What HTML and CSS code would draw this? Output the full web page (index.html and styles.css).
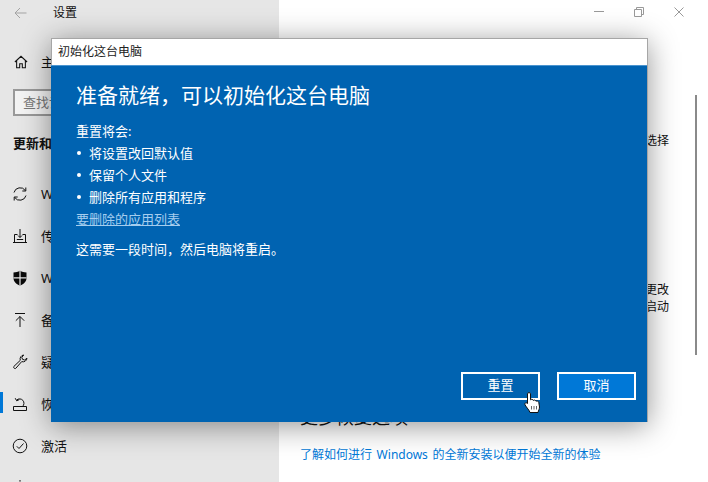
FILE: index.html
```html
<!DOCTYPE html>
<html lang="zh-CN">
<head>
<meta charset="utf-8">
<title>设置</title>
<link rel="stylesheet" href="styles.css">
</head>
<body>
<div class="app">
  <aside class="sidebar">
    <div class="titlebar">
      <svg class="back" width="13" height="12" viewBox="0 0 13 12"><path d="M12.500 6H1M6 1 1 6 6 11" fill="none" stroke="#a3a3a3" stroke-width="1"/></svg>
      <span class="app-title">设置</span>
    </div>
    <div class="nav-item home">
      <svg class="icon home-icon" width="14" height="14" viewBox="0 0 16 16"><path d="M1 8 8 1.500 15 8M3 6.500V14.500H6.500V10H9.500V14.500H13V6.500" fill="none" stroke="#111" stroke-width="1.200"/></svg>
      <span>主页</span>
    </div>
    <div class="search"><span>查找设置</span></div>
    <div class="section">更新和安全</div>
    <nav class="nav">
      <div class="nav-item">
        <svg class="icon" width="16" height="16" viewBox="0 0 16 16"><path d="M2 6.500A6.300 6.300 0 0 1 13.300 4.500M14 9.500A6.300 6.300 0 0 1 2.700 11.500M13.800 1.500V5H10.300M2.200 14.500V11H5.700" fill="none" stroke="#111" stroke-width="1"/></svg>
        <span>Windows 更新</span>
      </div>
      <div class="nav-item">
        <svg class="icon" width="16" height="16" viewBox="0 0 16 16"><path d="M1 14.500H15M2.500 14V6.500H5.500M10.500 6.500H13.500V14M8 1V9.500M6 7.500 8 9.500 10 7.500M4.800 11.500H11.200" fill="none" stroke="#111" stroke-width="1"/></svg>
        <span>传递优化</span>
      </div>
      <div class="nav-item">
        <svg class="icon" width="16" height="16" viewBox="0 0 16 16"><path d="M1.500 2.500C4 2.500 6 2 8 .8 10 2 12 2.500 14.500 2.500V8C14.500 11.500 12 14 8 15.500 4 14 1.500 11.500 1.500 8Z" fill="#0a0a0a"/><path d="M8 1V15.500M1.500 7.800H14.500" stroke="#e6e6e6" stroke-width="1.200"/></svg>
        <span>Windows 安全中心</span>
      </div>
      <div class="nav-item">
        <svg class="icon" width="16" height="16" viewBox="0 0 16 16"><path d="M3 1.500H13M8 15V4.500M3.800 8.700 8 4.500 12.200 8.700" fill="none" stroke="#111" stroke-width="1"/></svg>
        <span>备份</span>
      </div>
      <div class="nav-item">
        <svg class="icon" width="16" height="16" viewBox="0 0 16 16"><path d="M15 4.200A4 4 0 0 1 9.700 7.600L3.800 14.300C2.800 15.300 .9 13.600 1.900 12.400L8.300 6.300A4 4 0 0 1 11.700 1L9.800 3.300 10.500 5.300 12.600 6Z" fill="none" stroke="#111" stroke-width="1"/></svg>
        <span>疑难解答</span>
      </div>
      <div class="nav-item active">
        <svg class="icon" width="16" height="16" viewBox="0 0 16 16"><path d="M1.500 10.500H14.500V14.500H1.500ZM4.700 4A3.600 3.600 0 1 1 10.500 10.500M3.200 2.200 4.700 4.800 7.300 3.600M5 10.500H10.500" fill="none" stroke="#111" stroke-width="1"/></svg>
        <span>恢复</span>
      </div>
      <div class="nav-item">
        <svg class="icon" width="16" height="16" viewBox="0 0 16 16"><circle cx="8" cy="8" r="6.800" fill="none" stroke="#111" stroke-width="1"/><path d="M4.800 8.300 7 10.500 11.500 5.500" fill="none" stroke="#111" stroke-width="1"/></svg>
        <span>激活</span>
      </div>
      <div class="nav-item">
        <svg class="icon" width="16" height="16" viewBox="0 0 16 16"><circle cx="8" cy="6" r="4" fill="none" stroke="#111"/><path d="M8 1V0M2 15C3 11 13 11 14 15" fill="none" stroke="#111"/></svg>
        <span>查找我的设备</span>
      </div>
    </nav>
  </aside>
  <main class="content">
    <div class="window-controls">
      <svg width="10" height="10" viewBox="0 0 10 10"><path d="M0 4.500H10" stroke="#999"/></svg>
      <svg width="10" height="10" viewBox="0 0 10 10"><path d="M.5 2.500H7.500V9.500H.5ZM2.500 2.500V.5H9.500V7.500H7.500" fill="none" stroke="#999"/></svg>
      <svg width="10" height="10" viewBox="0 0 10 10"><path d="M.5 .5 9.500 9.500M9.500 .5 .5 9.500" stroke="#999"/></svg>
    </div>
    <div class="scroll-area">
      <div class="text-block block-a">
        <p>如果你的电脑未正常运行，重置电脑可能会解决问题。重置时，可以选择</p>
      </div>
      <div class="text-block block-b">
        <p>通过使用 Windows 设备映像进行启动、更改 Windows 启动设置或者更改</p>
        <p>从系统映像还原 Windows。这将重新启动</p>
      </div>
      <h2 class="more">更多恢复选项</h2>
      <a class="learn" href="#">了解如何进行 Windows 的全新安装以便开始全新的体验</a>
    </div>
    <div class="scrollbar"></div>
  </main>
</div>
<section class="dialog">
  <header class="dialog-title">初始化这台电脑</header>
  <div class="dialog-body">
    <h1>准备就绪，可以初始化这台电脑</h1>
    <p class="line lead">重置将会:</p>
    <ul>
      <li>将设置改回默认值</li>
      <li>保留个人文件</li>
      <li>删除所有应用和程序</li>
    </ul>
    <a class="line apps" href="#">要删除的应用列表</a>
    <p class="line note">这需要一段时间，然后电脑将重启。</p>
    <div class="actions">
      <button class="btn">重置</button>
      <button class="btn cancel">取消</button>
    </div>
  </div>
</section>
<svg class="cursor" width="17" height="21" viewBox="0 0 17 21"><path d="M3.500 1.800C3.500 .2 6.500 .2 6.500 1.800V7.800C7 7 9 7 9.300 8.500 9.800 7.700 11.700 7.900 12 9.300 12.600 8.600 14.500 9 14.800 10.500L15.500 15C15.500 17 14.500 18.500 14 20.500H6C5.500 18.500 2.500 15.500 1 12.800 .2 11.200 2 10 3.500 11.500Z" fill="#fff" stroke="#111" stroke-width="1"/><path d="M7.500 14V17.500M10 14V17.500M12.500 14V17.500" stroke="#666" stroke-width="1"/></svg>
</body>
</html>
```

FILE: styles.css
```css
* { box-sizing: border-box; }
html, body { margin: 0; height: 482px; overflow: hidden; }
body {
  position: relative;
  width: 708px;
  background: #fff;
  color: #111;
  font: 13px/22px "Noto Sans", "Noto Sans CJK SC", sans-serif;
}
p, h1, h2, ul { margin: 0; padding: 0; }
.app { display: flex; height: 482px; }

.sidebar { width: 279px; flex: none; background: #e6e6e6; overflow: hidden; }
.titlebar { display: flex; align-items: center; height: 25px; margin-top: 0; padding-left: 14px; }
.back { margin-right: 26px; }
.app-title { font-size: 12px; }
.home { height: 42px !important; margin-top: 16px; padding-left: 14px !important; }
.home-icon { margin-right: 13px !important; }
.search {
  width: 250px; height: 27px; margin: 6px 0 0 13px;
  border: 2px solid #999; background: #f3f3f3; padding-left: 8px;
  color: #777; line-height: 23px;
}
.section { margin: 16px 0 0 13px; font-weight: 700; line-height: 22px; }
.nav { margin-top: 19px; }
.nav-item {
  position: relative;
  display: flex; align-items: center; height: 42px; padding-left: 12px;
  white-space: nowrap;
}
.icon { margin-right: 13px; flex: none; }
.active::before {
  content: ""; position: absolute; left: 0; top: 9px;
  width: 3px; height: 21px; background: #0078d7;
}

.content { position: relative; flex: 1; padding-left: 21px; }
.window-controls {
  position: absolute; top: 7px; right: 24px;
  display: flex; gap: 30px;
}
.scroll-area { padding-top: 131px; }
.text-block { width: 369px; text-align: right; white-space: nowrap; font-size: 12px; }
.text-block p { line-height: 17px; direction: rtl; }
.block-a { height: 149px; padding-top: 1px; }
.block-b { height: 101px; padding-top: 1px; }
.more { font-size: 18px; font-weight: 400; line-height: 28px; margin-top: 22px; }
.learn { display: block; margin-top: 13px; font-size: 12px; word-spacing: 1.500px; color: #0078d7; text-decoration: none; }
.scrollbar { position: absolute; left: 416px; top: 95px; width: 2px; height: 260px; background: #8a8a8a; }

.dialog {
  position: absolute; left: 51px; top: 38px;
  display: flex; flex-direction: column;
  width: 597px; height: 384px;
  border: 1px solid #a6a6a6; border-bottom: 0; border-left: 0;
  box-shadow: 0 4px 28px rgba(0,0,0,.42);
  background: #0063b1;
}
.dialog-title {
  height: 26px; padding-left: 6px; background: #fff;
  border-left: 1px solid #a6a6a6;
  font-size: 12px; line-height: 25px; color: #222;
}
.dialog-body {
  flex: 1; display: flex; flex-direction: column;
  padding: 13px 11px 22px 25px; color: #fff;
  border-top: 1px solid #4a94cf;
}
.dialog-body h1 { font-size: 21px; font-weight: 400; line-height: 32px; margin-bottom: 9px; }
.line { display: block; }
.dialog-body ul { list-style: none; }
.dialog-body li { position: relative; padding-left: 13px; }
.dialog-body li::before {
  content: ""; position: absolute; left: 1px; top: 9px;
  width: 4px; height: 4px; border-radius: 50%; background: #fff;
}
.apps { color: #a5cdee; text-decoration: underline; }
.note { margin-top: 8px; }
.actions { display: flex; justify-content: flex-end; gap: 17px; margin-top: auto; }
.btn {
  width: 79px; height: 28px; padding: 0 0 2px;
  border: 2px solid #fff; background: #0063b1; color: #fff;
  font: inherit; line-height: 22px;
}
.cancel { background: #0078d7; }
.cursor { position: absolute; left: 524px; top: 392px; }
```
